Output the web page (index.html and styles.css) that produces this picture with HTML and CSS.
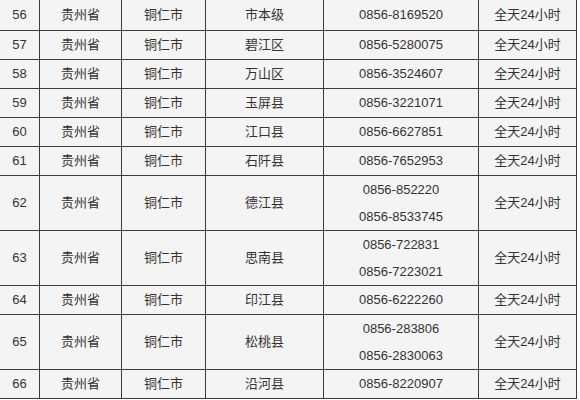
FILE: index.html
```html
<!DOCTYPE html>
<html lang="zh-CN">
<head>
<meta charset="utf-8">
<link rel="stylesheet" href="styles.css">
</head>
<body>
<table class="tbl">
<colgroup>
<col class="c1"><col class="c2"><col class="c3"><col class="c4"><col class="c5"><col class="c6">
</colgroup>
<tbody>
<tr class="first"><td>56</td><td>贵州省</td><td>铜仁市</td><td>市本级</td><td>0856-8169520</td><td>全天24小时</td></tr>
<tr><td>57</td><td>贵州省</td><td>铜仁市</td><td>碧江区</td><td>0856-5280075</td><td>全天24小时</td></tr>
<tr><td>58</td><td>贵州省</td><td>铜仁市</td><td>万山区</td><td>0856-3524607</td><td>全天24小时</td></tr>
<tr><td>59</td><td>贵州省</td><td>铜仁市</td><td>玉屏县</td><td>0856-3221071</td><td>全天24小时</td></tr>
<tr><td>60</td><td>贵州省</td><td>铜仁市</td><td>江口县</td><td>0856-6627851</td><td>全天24小时</td></tr>
<tr><td>61</td><td>贵州省</td><td>铜仁市</td><td>石阡县</td><td>0856-7652953</td><td>全天24小时</td></tr>
<tr class="tall"><td>62</td><td>贵州省</td><td>铜仁市</td><td>德江县</td><td><p class="ln">0856-852220</p><p class="ln">0856-8533745</p></td><td>全天24小时</td></tr>
<tr class="tall"><td>63</td><td>贵州省</td><td>铜仁市</td><td>思南县</td><td><p class="ln">0856-722831</p><p class="ln">0856-7223021</p></td><td>全天24小时</td></tr>
<tr><td>64</td><td>贵州省</td><td>铜仁市</td><td>印江县</td><td>0856-6222260</td><td>全天24小时</td></tr>
<tr class="tall"><td>65</td><td>贵州省</td><td>铜仁市</td><td>松桃县</td><td><p class="ln">0856-283806</p><p class="ln">0856-2830063</p></td><td>全天24小时</td></tr>
<tr><td>66</td><td>贵州省</td><td>铜仁市</td><td>沿河县</td><td>0856-8220907</td><td>全天24小时</td></tr>
</tbody>
</table>
</body>
</html>
```
FILE: styles.css
```css
html, body {
  margin: 0;
  padding: 0;
  background: #ffffff;
}
.tbl {
  border-collapse: collapse;
  table-layout: fixed;
  width: 577px;
  margin: -1px 0 0 -1px;
  font-family: "Liberation Sans", "Noto Sans CJK SC", sans-serif;
  font-size: 13px;
  color: #333333;
}
.c1 { width: 40px; }
.c2 { width: 82px; }
.c3 { width: 84px; }
.c4 { width: 118px; }
.c5 { width: 155px; }
.c6 { width: 98px; }
.tbl td {
  border: 1px solid #3c3c3c;
  background: #f4f4f4;
  text-align: center;
  vertical-align: middle;
  padding: 0;
  height: 28px;
  line-height: 28px;
  white-space: nowrap;
}
.tbl .first td {
  height: 30px;
}
.tbl .ln {
  margin: 0;
  line-height: 27px;
}
```
